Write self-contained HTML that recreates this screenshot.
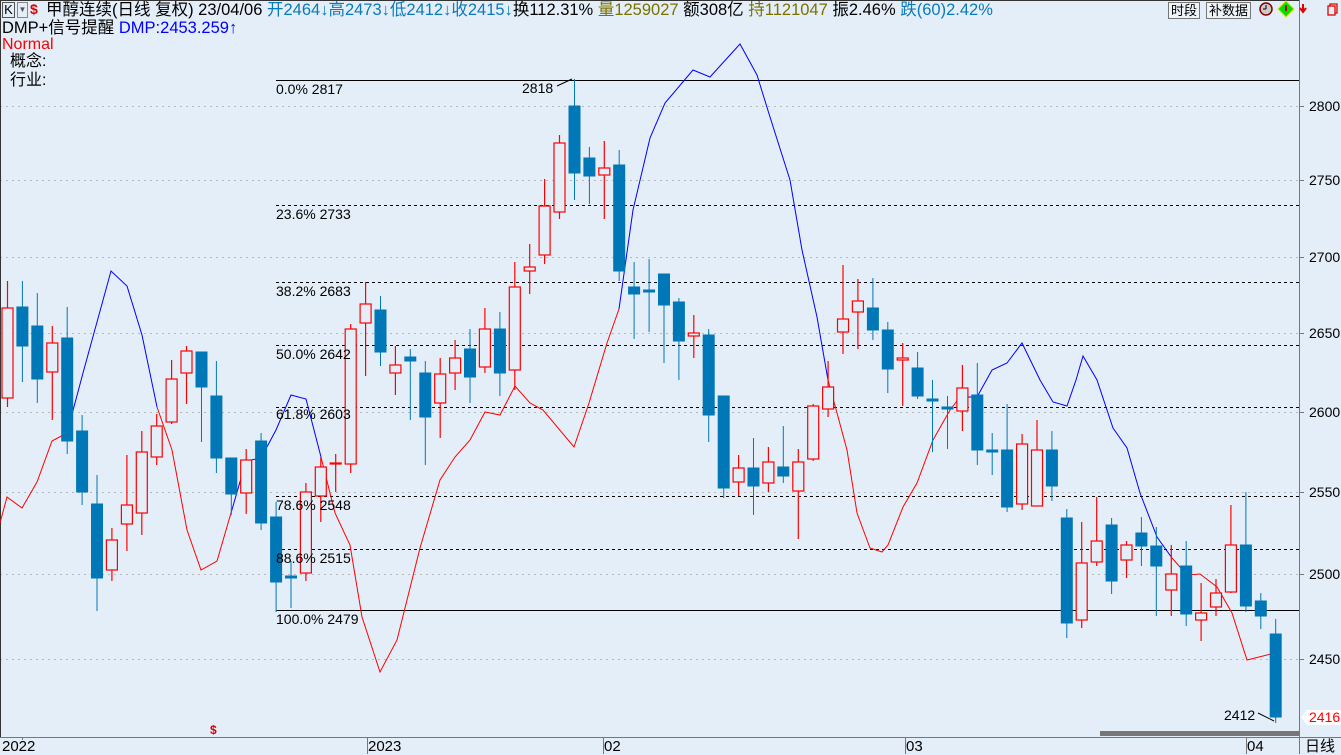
<!DOCTYPE html>
<html><head><meta charset="utf-8"><style>
html,body{margin:0;padding:0;width:1341px;height:754px;overflow:hidden;background:#e4eef8;font-family:"Liberation Sans","Noto Sans CJK SC",sans-serif;}
.t{position:absolute;font-size:14px;line-height:16px;white-space:nowrap;color:#000}
.b{color:#0a7ab8}.o{color:#7a7000}.bl{color:#0000ff}
svg{position:absolute;left:0;top:0}
.btn{position:absolute;top:2px;height:15px;border:1px solid #777;font-size:13px;line-height:15px;padding:0 2px;background:#eef3f9}
</style></head><body>
<svg width="1341" height="754" viewBox="0 0 1341 754">
<g stroke="#b8b8b8" stroke-dasharray="2,4" stroke-width="1">
<line x1="0" x2="1299" y1="106.5" y2="106.5"/><line x1="0" x2="1299" y1="180.5" y2="180.5"/>
<line x1="0" x2="1299" y1="257.5" y2="257.5"/><line x1="0" x2="1299" y1="333.5" y2="333.5"/>
<line x1="0" x2="1299" y1="412.5" y2="412.5"/><line x1="0" x2="1299" y1="492.5" y2="492.5"/>
<line x1="0" x2="1299" y1="574.5" y2="574.5"/><line x1="0" x2="1299" y1="659.5" y2="659.5"/>
</g>
<g stroke="#000" stroke-width="1">
<line x1="276" x2="1299" y1="80.5" y2="80.5"/>
<line x1="276" x2="1299" y1="610.5" y2="610.5"/>
<g stroke-dasharray="3,3">
<line x1="276" x2="1299" y1="205.5" y2="205.5"/><line x1="276" x2="1299" y1="282.5" y2="282.5"/>
<line x1="276" x2="1299" y1="345.5" y2="345.5"/><line x1="276" x2="1299" y1="407.5" y2="407.5"/>
<line x1="276" x2="1299" y1="496.5" y2="496.5"/><line x1="276" x2="1299" y1="549.5" y2="549.5"/>
</g>
<line x1="557" y1="86" x2="572" y2="79"/>
<line x1="1258" y1="713" x2="1274" y2="721"/>
</g>
<line x1="1299.5" y1="0" x2="1299.5" y2="754" stroke="#777"/>
<line x1="0" y1="737.5" x2="1341" y2="737.5" stroke="#777"/>
<line x1="0.5" y1="0" x2="0.5" y2="737" stroke="#333"/>
<line x1="0" y1="0.5" x2="1299" y2="0.5" stroke="#333"/>
<rect x="1100" y="731" width="199" height="5" fill="#777"/>
<g stroke="#777"><line x1="22.5" x2="22.5" y1="737" y2="740"/><line x1="367.5" x2="367.5" y1="737" y2="754"/><line x1="603.5" x2="603.5" y1="737" y2="754"/><line x1="905.5" x2="905.5" y1="737" y2="754"/><line x1="1246.5" x2="1246.5" y1="737" y2="754"/>
<line x1="1299" x2="1304" y1="106.5" y2="106.5"/><line x1="1299" x2="1304" y1="180.5" y2="180.5"/><line x1="1299" x2="1304" y1="257.5" y2="257.5"/><line x1="1299" x2="1304" y1="333.5" y2="333.5"/><line x1="1299" x2="1304" y1="412.5" y2="412.5"/><line x1="1299" x2="1304" y1="492.5" y2="492.5"/><line x1="1299" x2="1304" y1="574.5" y2="574.5"/><line x1="1299" x2="1304" y1="659.5" y2="659.5"/></g>
<polyline fill="none" stroke="#ff0000" stroke-width="1" points="0,523 7,497 22,508 37,482 52,441 67,433"/>
<polyline fill="none" stroke="#0000ff" stroke-width="1" points="67,433 83,373 111,271 127,286 142,335 157,407"/>
<polyline fill="none" stroke="#ff0000" stroke-width="1" points="157,407 172,450 187,530 201,570 217,561 231,513"/>
<polyline fill="none" stroke="#0000ff" stroke-width="1" points="231,513 246,461 261,458 276,430 291,395 306,399 321,457"/>
<polyline fill="none" stroke="#ff0000" stroke-width="1" points="321,457 335,513 350,545 362,617 380,672 397,640 420,548 440,480 455,457 470,440 485,412 500,415 515,386 530,403 543,410 574,447 589,403 607,343 619,309"/>
<polyline fill="none" stroke="#0000ff" stroke-width="1" points="619,309 633,210 650,138 665,103 693,70 710,77 740,44 757,75 770,117 790,180 802,250 817,317 828,380"/>
<polyline fill="none" stroke="#ff0000" stroke-width="1" points="828,380 837,413 847,450 857,513 870,548 882,552 888,545 903,507 917,483 933,440 950,410 960,397"/>
<polyline fill="none" stroke="#0000ff" stroke-width="1" points="960,397 977,397 992,370 1007,363 1022,343 1040,380 1053,402 1067,406 1076,380 1083,356 1097,380 1113,428 1127,448 1140,493 1157,537 1172,558"/>
<polyline fill="none" stroke="#ff0000" stroke-width="1" points="1172,558 1187,575 1200,574 1217,587 1232,613 1247,660 1275,653"/>
<g>
<g stroke="#0077b6" fill="#0077b6">
<line x1="22.4" x2="22.4" y1="281" y2="382"/><rect x="16.9" y="307" width="11" height="39"/>
<line x1="37.3" x2="37.3" y1="293" y2="403"/><rect x="31.8" y="326" width="11" height="53"/>
<line x1="67.2" x2="67.2" y1="307" y2="454"/><rect x="61.7" y="338" width="11" height="103"/>
<line x1="82.1" x2="82.1" y1="415" y2="505"/><rect x="76.6" y="431" width="11" height="61"/>
<line x1="97" x2="97" y1="475" y2="611"/><rect x="91.5" y="504" width="11" height="74"/>
<line x1="201.5" x2="201.5" y1="352" y2="442"/><rect x="196" y="352" width="11" height="35"/>
<line x1="216.4" x2="216.4" y1="361" y2="473"/><rect x="210.9" y="396" width="11" height="62"/>
<line x1="231.3" x2="231.3" y1="458" y2="515"/><rect x="225.8" y="458" width="11" height="36"/>
<line x1="261.1" x2="261.1" y1="433" y2="530"/><rect x="255.6" y="441" width="11" height="82"/>
<line x1="276.1" x2="276.1" y1="502" y2="612"/><rect x="270.6" y="517" width="11" height="65"/>
<line x1="291" x2="291" y1="561" y2="608"/><rect x="285.5" y="576" width="11" height="2"/>
<line x1="380.5" x2="380.5" y1="296" y2="366"/><rect x="375" y="310" width="11" height="42"/>
<line x1="410.3" x2="410.3" y1="349" y2="420"/><rect x="404.8" y="357" width="11" height="4"/>
<line x1="425.3" x2="425.3" y1="361" y2="465"/><rect x="419.8" y="373" width="11" height="44"/>
<line x1="470" x2="470" y1="329" y2="403"/><rect x="464.5" y="349" width="11" height="28"/>
<line x1="499.9" x2="499.9" y1="312" y2="396"/><rect x="494.4" y="329" width="11" height="44"/>
<line x1="574.5" x2="574.5" y1="79" y2="200"/><rect x="569" y="106" width="11" height="67"/>
<line x1="589.4" x2="589.4" y1="147" y2="204"/><rect x="583.9" y="158" width="11" height="18"/>
<line x1="619.2" x2="619.2" y1="150" y2="281"/><rect x="613.7" y="165" width="11" height="106"/>
<line x1="634.1" x2="634.1" y1="262" y2="339"/><rect x="628.6" y="287" width="11" height="7"/>
<line x1="649.1" x2="649.1" y1="259" y2="332"/><rect x="643.6" y="290" width="11" height="2"/>
<line x1="664" x2="664" y1="274" y2="363"/><rect x="658.5" y="274" width="11" height="31"/>
<line x1="678.9" x2="678.9" y1="298" y2="380"/><rect x="673.4" y="302" width="11" height="39"/>
<line x1="708.7" x2="708.7" y1="329" y2="442"/><rect x="703.2" y="335" width="11" height="80"/>
<line x1="723.7" x2="723.7" y1="396" y2="498"/><rect x="718.2" y="396" width="11" height="92"/>
<line x1="753.5" x2="753.5" y1="438" y2="515"/><rect x="748" y="468" width="11" height="18"/>
<line x1="783.3" x2="783.3" y1="426" y2="483"/><rect x="777.8" y="467" width="11" height="9"/>
<line x1="872.9" x2="872.9" y1="278" y2="340"/><rect x="867.4" y="308" width="11" height="22"/>
<line x1="887.8" x2="887.8" y1="322" y2="393"/><rect x="882.3" y="330" width="11" height="39"/>
<line x1="917.6" x2="917.6" y1="352" y2="399"/><rect x="912.1" y="368" width="11" height="28"/>
<line x1="932.5" x2="932.5" y1="380" y2="452"/><rect x="927" y="399" width="11" height="2"/>
<line x1="947.5" x2="947.5" y1="396" y2="449"/><rect x="942" y="407" width="11" height="2"/>
<line x1="977.3" x2="977.3" y1="363" y2="465"/><rect x="971.8" y="395" width="11" height="55"/>
<line x1="992.2" x2="992.2" y1="433" y2="475"/><rect x="986.7" y="450" width="11" height="2"/>
<line x1="1007.1" x2="1007.1" y1="404" y2="512"/><rect x="1001.6" y="450" width="11" height="57"/>
<line x1="1051.9" x2="1051.9" y1="431" y2="501"/><rect x="1046.4" y="450" width="11" height="36"/>
<line x1="1066.8" x2="1066.8" y1="509" y2="638"/><rect x="1061.3" y="518" width="11" height="105"/>
<line x1="1111.6" x2="1111.6" y1="518" y2="594"/><rect x="1106.1" y="525" width="11" height="56"/>
<line x1="1141.4" x2="1141.4" y1="517" y2="566"/><rect x="1135.9" y="533" width="11" height="13"/>
<line x1="1156.3" x2="1156.3" y1="527" y2="616"/><rect x="1150.8" y="546" width="11" height="20"/>
<line x1="1186.2" x2="1186.2" y1="541" y2="626"/><rect x="1180.7" y="566" width="11" height="48"/>
<line x1="1245.9" x2="1245.9" y1="492" y2="612"/><rect x="1240.4" y="545" width="11" height="61"/>
<line x1="1260.8" x2="1260.8" y1="593" y2="629"/><rect x="1255.3" y="601" width="11" height="15"/>
<line x1="1275.7" x2="1275.7" y1="619" y2="723"/><rect x="1270.2" y="634" width="11" height="83"/>
</g>
<g stroke="#ff0000" fill="#e4eef8" stroke-width="1.2">
<line x1="7.5" x2="7.5" y1="281" y2="407"/><rect x="2" y="308" width="11" height="90"/>
<line x1="52.3" x2="52.3" y1="326" y2="420"/><rect x="46.8" y="343" width="11" height="29"/>
<line x1="111.9" x2="111.9" y1="528" y2="581"/><rect x="106.4" y="540" width="11" height="30"/>
<line x1="126.9" x2="126.9" y1="455" y2="551"/><rect x="121.4" y="505" width="11" height="19"/>
<line x1="141.8" x2="141.8" y1="431" y2="535"/><rect x="136.3" y="452" width="11" height="61"/>
<line x1="156.7" x2="156.7" y1="414" y2="465"/><rect x="151.2" y="426" width="11" height="31"/>
<line x1="171.6" x2="171.6" y1="360" y2="424"/><rect x="166.1" y="379" width="11" height="43"/>
<line x1="186.5" x2="186.5" y1="346" y2="404"/><rect x="181" y="351" width="11" height="22"/>
<line x1="246.2" x2="246.2" y1="449" y2="514"/><rect x="240.7" y="460" width="11" height="33"/>
<line x1="305.9" x2="305.9" y1="483" y2="581"/><rect x="300.4" y="492" width="11" height="81"/>
<line x1="320.8" x2="320.8" y1="457" y2="522"/><rect x="315.3" y="467" width="11" height="29"/>
<line x1="335.7" x2="335.7" y1="454" y2="492"/><rect x="330.2" y="463" width="11" height="1"/>
<line x1="350.7" x2="350.7" y1="324" y2="473"/><rect x="345.2" y="329" width="11" height="135"/>
<line x1="365.6" x2="365.6" y1="282" y2="376"/><rect x="360.1" y="304" width="11" height="19"/>
<line x1="395.4" x2="395.4" y1="346" y2="395"/><rect x="389.9" y="365" width="11" height="8"/>
<line x1="440.2" x2="440.2" y1="358" y2="438"/><rect x="434.7" y="374" width="11" height="29"/>
<line x1="455.1" x2="455.1" y1="340" y2="390"/><rect x="449.6" y="358" width="11" height="15"/>
<line x1="484.9" x2="484.9" y1="308" y2="373"/><rect x="479.4" y="329" width="11" height="38"/>
<line x1="514.8" x2="514.8" y1="262" y2="390"/><rect x="509.3" y="287" width="11" height="83"/>
<line x1="529.7" x2="529.7" y1="244" y2="294"/><rect x="524.2" y="267" width="11" height="4"/>
<line x1="544.6" x2="544.6" y1="179" y2="264"/><rect x="539.1" y="206" width="11" height="49"/>
<line x1="559.5" x2="559.5" y1="135" y2="219"/><rect x="554" y="143" width="11" height="69"/>
<line x1="604.3" x2="604.3" y1="141" y2="219"/><rect x="598.8" y="168" width="11" height="7"/>
<line x1="693.8" x2="693.8" y1="315" y2="358"/><rect x="688.3" y="333" width="11" height="3"/>
<line x1="738.6" x2="738.6" y1="455" y2="496"/><rect x="733.1" y="468" width="11" height="14"/>
<line x1="768.4" x2="768.4" y1="447" y2="492"/><rect x="762.9" y="462" width="11" height="21"/>
<line x1="798.3" x2="798.3" y1="449" y2="539"/><rect x="792.8" y="462" width="11" height="29"/>
<line x1="813.2" x2="813.2" y1="404" y2="461"/><rect x="807.7" y="406" width="11" height="53"/>
<line x1="828.1" x2="828.1" y1="361" y2="417"/><rect x="822.6" y="387" width="11" height="22"/>
<line x1="843" x2="843" y1="265" y2="354"/><rect x="837.5" y="319" width="11" height="13"/>
<line x1="857.9" x2="857.9" y1="279" y2="349"/><rect x="852.4" y="301" width="11" height="11"/>
<line x1="902.7" x2="902.7" y1="343" y2="406"/><rect x="897.2" y="358" width="11" height="2"/>
<line x1="962.4" x2="962.4" y1="365" y2="431"/><rect x="956.9" y="388" width="11" height="23"/>
<line x1="1022.1" x2="1022.1" y1="434" y2="510"/><rect x="1016.6" y="444" width="11" height="60"/>
<line x1="1037" x2="1037" y1="420" y2="506"/><rect x="1031.5" y="450" width="11" height="56"/>
<line x1="1081.7" x2="1081.7" y1="522" y2="628"/><rect x="1076.2" y="563" width="11" height="57"/>
<line x1="1096.7" x2="1096.7" y1="497" y2="566"/><rect x="1091.2" y="541" width="11" height="21"/>
<line x1="1126.5" x2="1126.5" y1="541" y2="578"/><rect x="1121" y="545" width="11" height="15"/>
<line x1="1171.3" x2="1171.3" y1="545" y2="616"/><rect x="1165.8" y="574" width="11" height="16"/>
<line x1="1201.1" x2="1201.1" y1="583" y2="641"/><rect x="1195.6" y="613" width="11" height="7"/>
<line x1="1216" x2="1216" y1="579" y2="616"/><rect x="1210.5" y="593" width="11" height="14"/>
<line x1="1230.9" x2="1230.9" y1="505" y2="593"/><rect x="1225.4" y="545" width="11" height="47"/>
</g>
</g>
<circle cx="1266" cy="9" r="6" fill="#d0c8c8" stroke="#800000" stroke-width="1.5"/>
<line x1="1266" y1="9" x2="1266" y2="5" stroke="#000"/><line x1="1266" y1="9" x2="1263" y2="9" stroke="#000"/>
<polygon points="1286,1 1294,9 1286,17 1278,9" fill="#00e000" stroke="#e0e000"/>
<line x1="1286" y1="5" x2="1286" y2="11" stroke="#c00000" stroke-width="2"/>
<path d="M1303,4 v6 M1300,8 l3,4 l3,-4" stroke="#e00000" stroke-width="2" fill="none"/>
<rect x="1328" y="6" width="7" height="9" fill="none" stroke="#e00000" stroke-width="1.3"/>
<path d="M1330,6 v-2 h7 v9 h-2" fill="none" stroke="#e00000" stroke-width="1.3"/>
<polygon points="1301,717 1307,710 1341,710 1341,725 1307,725" fill="#fff"/>
</svg>
<div class="t" style="left:2px;top:2px;border:1px solid #555;width:11px;height:14px;line-height:14px;font-size:13px;text-align:center">K</div>
<div class="t" style="left:17px;top:2px;border:1px solid #888;width:9px;height:14px;font-size:8px;line-height:14px;text-align:center;color:#555">▼</div>
<div class="t" style="left:30px;top:1px;color:#e00000;font-weight:bold;font-size:14px">$</div>
<div class="t" style="left:46px;top:1px;font-size:16.5px;line-height:18px">甲醇连续(日线 复权) 23/04/06 <span class="b">开2464↓高2473↓低2412↓收2415↓</span>换112.31% <span class="o">量1259027</span> 额308亿 <span class="o">持1121047</span> 振2.46% <span class="b">跌(60)2.42%</span></div>
<div class="t" style="left:2px;top:19px;font-size:16.5px;line-height:18px">DMP+信号提醒 <span class="bl">DMP:2453.259↑</span></div>
<div class="t" style="left:2px;top:36px;color:#ff0000;font-size:16px;line-height:18px">Normal</div>
<div class="t" style="left:10px;top:53px;font-size:16px;line-height:18px">概念:</div>
<div class="t" style="left:10px;top:72px;font-size:16px;line-height:18px">行业:</div>
<div class="btn" style="left:1168px">时段</div>
<div class="btn" style="left:1206px">补数据</div>
<div class="t" style="left:276px;top:81px">0.0% 2817</div>
<div class="t" style="left:522px;top:80px">2818</div>
<div class="t" style="left:276px;top:206px">23.6% 2733</div>
<div class="t" style="left:276px;top:283px">38.2% 2683</div>
<div class="t" style="left:276px;top:346px">50.0% 2642</div>
<div class="t" style="left:276px;top:406px">61.8% 2603</div>
<div class="t" style="left:276px;top:497px">78.6% 2548</div>
<div class="t" style="left:276px;top:550px">88.6% 2515</div>
<div class="t" style="left:276px;top:611px">100.0% 2479</div>
<div class="t" style="left:1224px;top:707px">2412</div>
<div class="t" style="left:1309px;top:98px">2800</div>
<div class="t" style="left:1309px;top:172px">2750</div>
<div class="t" style="left:1309px;top:249px">2700</div>
<div class="t" style="left:1309px;top:325px">2650</div>
<div class="t" style="left:1309px;top:404px">2600</div>
<div class="t" style="left:1309px;top:484px">2550</div>
<div class="t" style="left:1309px;top:566px">2500</div>
<div class="t" style="left:1309px;top:651px">2450</div>
<div class="t" style="left:1309px;top:709px;color:#ff0000">2416</div>
<div class="t" style="left:2px;top:739px;font-size:15px">2022</div>
<div class="t" style="left:210px;top:722px;color:#e00000;font-weight:bold;font-size:12px">$</div>
<div class="t" style="left:368px;top:739px;font-size:15px">2023</div>
<div class="t" style="left:604px;top:739px;font-size:15px">02</div>
<div class="t" style="left:906px;top:739px;font-size:15px">03</div>
<div class="t" style="left:1247px;top:739px;font-size:15px">04</div>
<div class="t" style="left:1305px;top:739px;font-size:15px">日线</div>
</body></html>
